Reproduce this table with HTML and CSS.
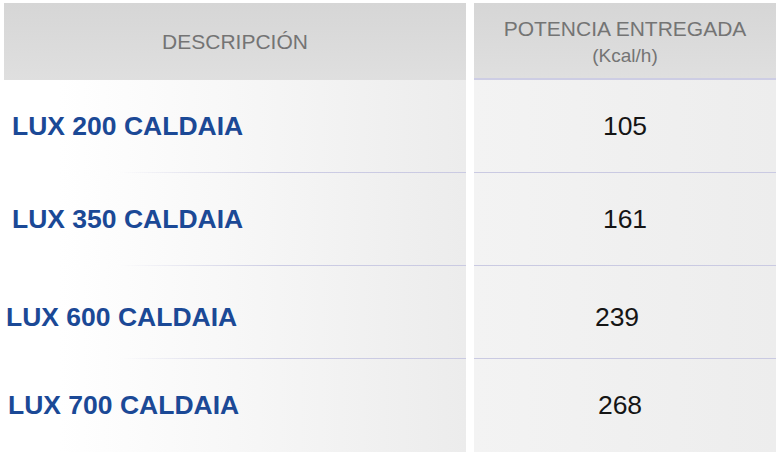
FILE: index.html
```html
<!DOCTYPE html>
<html lang="es">
<head>
<meta charset="utf-8">
<title>Potencia entregada</title>
<link rel="stylesheet" href="styles.css">
</head>
<body>
<div class="table">
  <div class="th th-desc">DESCRIPCIÓN</div>
  <div class="th th-pot">POTENCIA ENTREGADA<br><span class="unit">(Kcal/h)</span></div>

  <div class="td name">LUX 200 CALDAIA</div>
  <div class="td val">105</div>

  <div class="td name">LUX 350 CALDAIA</div>
  <div class="td val">161</div>

  <div class="td name low shift-l">LUX 600 CALDAIA</div>
  <div class="td val low shift-v">239</div>

  <div class="td name last shift-m">LUX 700 CALDAIA</div>
  <div class="td val last shift-w">268</div>
</div>
</body>
</html>
```

FILE: styles.css
```css
html, body {
  margin: 0;
  padding: 0;
  background: #ffffff;
}
body {
  padding: 3px 0 0 4px;
  font-family: "Liberation Sans", Arial, sans-serif;
  overflow: hidden;
}
.table {
  display: grid;
  grid-template-columns: 462px 302px;
  grid-template-rows: 77px 93px 93px 93px 93px;
  column-gap: 8px;
}
.th {
  background: linear-gradient(to bottom, #d6d6d6, #dfdfdf);
  color: #747474;
  font-size: 21px;
  display: flex;
  align-items: center;
  justify-content: center;
  text-align: center;
}
.th-pot {
  flex-direction: column;
  line-height: 27px;
  padding-top: 2px;
  box-sizing: border-box;
  border-bottom: 2px solid #cdcde4;
}
.th-pot .unit {
  font-size: 19px;
}
.td {
  display: flex;
  align-items: center;
  box-sizing: border-box;
  border-bottom: 1px solid transparent;
}
.name {
  background: linear-gradient(to right, #ffffff 0%, #ffffff 12%, #f6f6f6 55%, #ececec 100%);
  border-image: linear-gradient(to right, rgba(204,204,228,0) 0%, rgba(204,204,228,0) 25%, #ccccE4 60%, #cacae2 100%) 1;
  color: #1b4996;
  font-weight: bold;
  font-size: 26.5px;
  padding-left: 8px;
}
.val {
  background: linear-gradient(to right, #f3f3f3, #ededed);
  border-bottom-color: #cacae2;
  color: #151515;
  font-size: 26.5px;
  justify-content: center;
}
.last {
  border-bottom: none;
}
.low {
  padding-top: 10px;
}
.shift-l {
  padding-left: 2px;
}
.shift-m {
  padding-left: 4px;
}
.shift-v {
  padding-right: 16px;
}
.shift-w {
  padding-right: 10px;
}
```
